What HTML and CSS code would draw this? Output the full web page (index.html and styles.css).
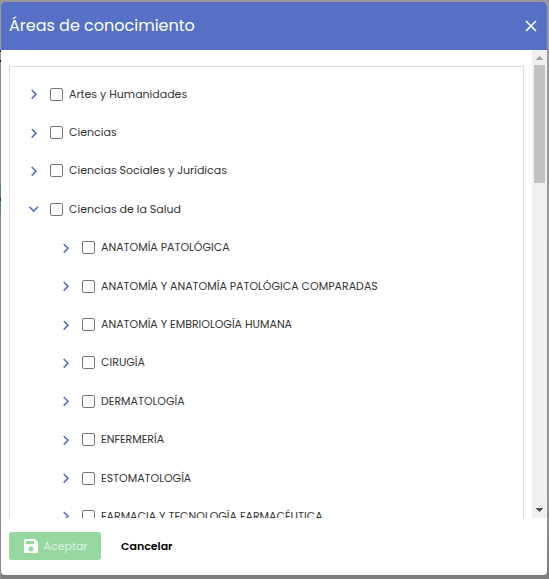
FILE: index.html
```html
<!DOCTYPE html>
<html lang="es">
<head>
<meta charset="utf-8">
<meta name="viewport" content="width=device-width, initial-scale=1">
<title>Áreas de conocimiento</title>
<link rel="stylesheet" href="styles.css">
</head>
<body>
<svg class="sprite" aria-hidden="true">
  <symbol id="chevron" viewBox="0 0 12 12"><path d="M3.7 2 8 6.300 3.700 10.600" fill="none" stroke="currentColor" stroke-width="1.6"/></symbol>
</svg>
<div class="page-edge" aria-hidden="true"></div>
<section class="dialog" role="dialog" aria-labelledby="title">
  <header class="dialog-header">
    <h1 id="title">Áreas de conocimiento</h1>
    <button class="close" type="button" aria-label="Cerrar">
      <svg viewBox="0 0 12 12"><path d="M1 1 11 11M11 1 1 11" fill="none" stroke="currentColor" stroke-width="1.6"/></svg>
    </button>
  </header>
  <div class="dialog-body">
    <div class="content">
      <ul class="tree">
        <li><div class="row"><button class="toggle" type="button" aria-label="Expandir"><svg><use href="#chevron"/></svg></button><input type="checkbox" id="a1"><label for="a1">Artes y Humanidades</label></div></li>
        <li><div class="row"><button class="toggle" type="button" aria-label="Expandir"><svg><use href="#chevron"/></svg></button><input type="checkbox" id="a2"><label for="a2">Ciencias</label></div></li>
        <li><div class="row"><button class="toggle" type="button" aria-label="Expandir"><svg><use href="#chevron"/></svg></button><input type="checkbox" id="a3"><label for="a3">Ciencias Sociales y Jurídicas</label></div></li>
        <li>
          <div class="row"><button class="toggle open" type="button" aria-label="Contraer"><svg><use href="#chevron"/></svg></button><input type="checkbox" id="a4"><label for="a4">Ciencias de la Salud</label></div>
          <ul class="branch">
            <li><div class="row"><button class="toggle" type="button" aria-label="Expandir"><svg><use href="#chevron"/></svg></button><input type="checkbox" id="b1"><label for="b1">ANATOMÍA PATOLÓGICA</label></div></li>
            <li><div class="row"><button class="toggle" type="button" aria-label="Expandir"><svg><use href="#chevron"/></svg></button><input type="checkbox" id="b2"><label for="b2">ANATOMÍA Y ANATOMÍA PATOLÓGICA COMPARADAS</label></div></li>
            <li><div class="row"><button class="toggle" type="button" aria-label="Expandir"><svg><use href="#chevron"/></svg></button><input type="checkbox" id="b3"><label for="b3">ANATOMÍA Y EMBRIOLOGÍA HUMANA</label></div></li>
            <li><div class="row"><button class="toggle" type="button" aria-label="Expandir"><svg><use href="#chevron"/></svg></button><input type="checkbox" id="b4"><label for="b4">CIRUGÍA</label></div></li>
            <li><div class="row"><button class="toggle" type="button" aria-label="Expandir"><svg><use href="#chevron"/></svg></button><input type="checkbox" id="b5"><label for="b5">DERMATOLOGÍA</label></div></li>
            <li><div class="row"><button class="toggle" type="button" aria-label="Expandir"><svg><use href="#chevron"/></svg></button><input type="checkbox" id="b6"><label for="b6">ENFERMERÍA</label></div></li>
            <li><div class="row"><button class="toggle" type="button" aria-label="Expandir"><svg><use href="#chevron"/></svg></button><input type="checkbox" id="b7"><label for="b7">ESTOMATOLOGÍA</label></div></li>
            <li><div class="row"><button class="toggle" type="button" aria-label="Expandir"><svg><use href="#chevron"/></svg></button><input type="checkbox" id="b8"><label for="b8">FARMACIA Y TECNOLOGÍA FARMACÉUTICA</label></div></li>
          </ul>
        </li>
      </ul>
    </div>
    <div class="scrollbar" aria-hidden="true">
      <svg class="arrow up" viewBox="0 0 15 15" shape-rendering="crispEdges"><path d="M7 6h1v1h1v1h1v1h1v1H4V9h1V8h1V7h1z"/></svg>
      <div class="track"><div class="thumb"></div></div>
      <svg class="arrow down" viewBox="0 0 15 15" shape-rendering="crispEdges"><path d="M4 5h7v1h-1v1H9v1H8v1H7V8H6V7H5V6H4z"/></svg>
    </div>
  </div>
  <footer class="dialog-footer">
    <button class="accept" type="button" disabled>
      <svg viewBox="0 0 16 16"><path fill-rule="evenodd" d="M2 1h10l3 3v9.500Q15 15 13.500 15h-11Q1 15 1 13.500V2.500Q1 1 2.500 1zM3 3v3h8V3zM8 8.500a2.500 2.500 0 1 0 0 5 2.500 2.500 0 0 0 0-5z"/></svg>
      <span>Aceptar</span>
    </button>
    <button class="cancel" type="button">Cancelar</button>
  </footer>
</section>
</body>
</html>
```

FILE: styles.css
```css
* { box-sizing: border-box; }

html { height: 100%; }

body {
  display: flex;
  height: 100%;
  margin: 0;
  padding: 2px 2px 4px 1px;
  background: linear-gradient(#999 0, #969696 85%, #7d7d7d 100%);
  font-family: Poppins, Inter, "Open Sans", sans-serif;
  font-size: 12px;
  color: #333;
}

button { margin: 0; padding: 0; border: 0; background: none; font: inherit; }

svg { display: block; }

.sprite { position: absolute; width: 0; height: 0; }

/* Sliver of the dimmed page left of the dialog */
.page-edge {
  position: absolute;
  top: 0;
  left: 0;
  width: 1px;
  height: 100%;
  background: linear-gradient(#999 50px, #222 50px 52px, #999 52px 60px, #111 60px 62px, #8c8c8c 62px 184px, #5a8a6c 184px 198px, #333 198px 201px, #5a8a6c 201px 214px, #8c8c8c 214px);
}

.dialog {
  position: relative;
  display: flex;
  flex: 1;
  flex-direction: column;
  min-width: 0;
  overflow: hidden;
  border-radius: 4px;
  background: #fff;
}

.dialog-header {
  display: flex;
  align-items: center;
  justify-content: space-between;
  height: 48px;
  padding: 0 10px 0 8px;
  background: #5570c5;
  color: #fff;
}

.dialog-header h1 { margin: 0; font-size: 16px; font-weight: 400; line-height: 24px; }

.close { color: #fff; }
.close svg { width: 12px; height: 12px; }

.dialog-body { display: flex; flex: 1; min-height: 0; }

.content {
  flex: 1;
  min-width: 0;
  padding: 16px 8px;
  overflow-y: auto;
  scrollbar-width: none;
}

.tree, .branch { margin: 0; padding: 0; list-style: none; }
.tree { padding: 8px 16px; border: 1px solid #ddd; }
.branch { padding-left: 32px; }

.row { display: flex; align-items: center; height: 3.2em; }

.toggle { width: 16px; margin-right: 8px; color: #5570c5; }
.toggle svg { width: 12px; height: 12px; margin: 0 auto; }
.toggle.open svg { transform: rotate(90deg); }

.row input {
  flex: none;
  width: 13px;
  height: 13px;
  margin: 0 6px 0 0;
  appearance: none;
  border: 1px solid #767676;
  border-radius: 2px;
  background: #fff;
}

.row label { font-size: 11px; line-height: 17px; white-space: nowrap; }

.scrollbar {
  display: flex;
  flex-direction: column;
  width: 15px;
  background: #f0f0f0;
}

.arrow { width: 15px; height: 15px; }
.up { fill: #a3a3a3; }
.down { fill: #505050; }
.track { flex: 1; padding: 0 2px; }
.thumb { height: 27%; background: #c1c1c1; }

.dialog-footer {
  display: flex;
  align-items: flex-start;
  gap: 20px;
  height: 57px;
  padding: 14px 8px;
}

.accept {
  display: flex;
  align-items: center;
  justify-content: center;
  gap: 5px;
  width: 92px;
  height: 28px;
  border-radius: 3px;
  background: #96d8a0;
  color: #ddf3e1;
  font-size: 11px;
}

.accept svg { width: 16px; height: 16px; fill: #fff; }

.cancel { height: 28px; color: #000; font-size: 11px; font-weight: 600; }
```
